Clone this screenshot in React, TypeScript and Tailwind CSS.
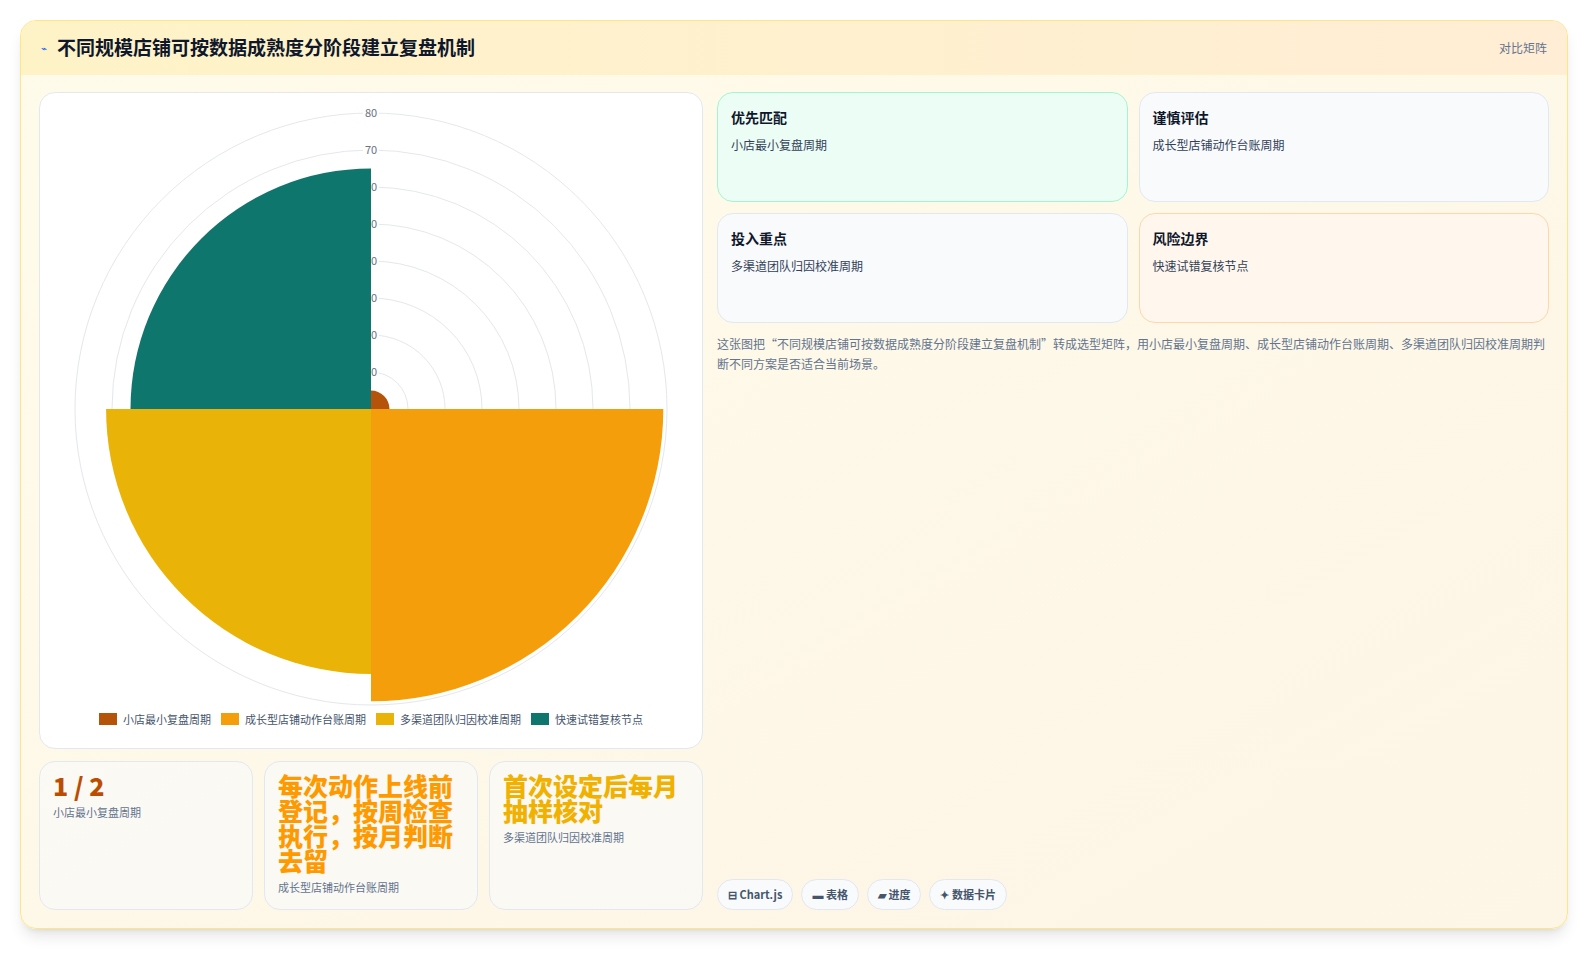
import React from "react";

const font = { fontFamily: '"Noto Sans CJK SC", "Noto Sans", sans-serif' };

const CX = 331;
const CY = 316;
const STEP = 3.7; // px per unit

function sector(r: number, a0: number, a1: number) {
  // angles in degrees, 0 = up, clockwise
  const p = (a: number) => {
    const t = ((a - 90) * Math.PI) / 180;
    return [CX + r * Math.cos(t), CY + r * Math.sin(t)];
  };
  const [x0, y0] = p(a0);
  const [x1, y1] = p(a1);
  return `M${CX},${CY} L${x0},${y0} A${r},${r} 0 0 1 ${x1},${y1} Z`;
}

const segments = [
  { v: 5, color: "#b45309", a: 0 },
  { v: 79, color: "#f59e0b", a: 90 },
  { v: 71.6, color: "#eab308", a: 180 },
  { v: 65, color: "#0f766e", a: 270 },
];

const legend = [
  { label: "小店最小复盘周期", color: "#b45309" },
  { label: "成长型店铺动作台账周期", color: "#f59e0b" },
  { label: "多渠道团队归因校准周期", color: "#eab308" },
  { label: "快速试错复核节点", color: "#0f766e" },
];

function Chart() {
  const ticks = [10, 20, 30, 40, 50, 60, 70, 80];
  return (
    <div className="rounded-2xl border border-slate-200 bg-white px-0 pt-0 pb-5 flex flex-col items-center">
      <svg width="662" height="622" className="block">
        {ticks.map((t) => (
          <circle key={t} cx={CX} cy={CY} r={t * STEP} fill="none" stroke="#e5e7eb" strokeWidth="1" />
        ))}
        {ticks.map((t) => (
          <g key={"l" + t}>
            <rect x={CX - 8} y={CY - t * STEP - 6} width="16" height="12" fill="white" />
            <text x={CX} y={CY - t * STEP + 4} textAnchor="middle" fontSize="11" fill="#6b7280" style={font}>
              {t}
            </text>
          </g>
        ))}
        {segments.map((s) => (
          <path key={s.color} d={sector(s.v * STEP, s.a, s.a + 90)} fill={s.color} />
        ))}
      </svg>
      <div className="flex items-center gap-2.5 text-[11px] text-slate-600 -mt-1" style={font}>
        {legend.map((l) => (
          <div key={l.label} className="flex items-center gap-1.5">
            <span className="inline-block w-[18px] h-[12px]" style={{ background: l.color }} />
            <span>{l.label}</span>
          </div>
        ))}
      </div>
    </div>
  );
}

function Stat({ big, color, sub }: { big: string; color: string; sub: string }) {
  return (
    <div className="flex-1 h-[149px] rounded-2xl border border-slate-200 bg-slate-50/60 px-[13px] pt-[11px]">
      <div className={`text-[25px] leading-[25px] font-black ${color}`}>{big}</div>
      <div className="mt-1.5 text-[11px] text-slate-500">{sub}</div>
    </div>
  );
}

function Card({ title, sub, cls }: { title: string; sub: string; cls: string }) {
  return (
    <div className={`h-[110px] rounded-2xl border px-[13px] pt-[14px] ${cls}`}>
      <div className="text-[14px] font-bold text-slate-900">{title}</div>
      <div className="mt-2 text-[12px] text-slate-700">{sub}</div>
    </div>
  );
}

export default function App() {
  return (
    <div className="min-h-screen bg-white p-5" style={font}>
      <div className="rounded-2xl border border-amber-200 bg-gradient-to-br from-[#fffbeb] to-[#fdf5e6] shadow-lg overflow-hidden">
        <div className="h-[54px] flex items-center justify-between px-5 bg-gradient-to-r from-[#fef3c7] to-[#ffedd5] border-b border-amber-100">
          <div className="flex items-center gap-2.5">
            <span className="text-[10px] text-blue-600">⌁</span>
            <span className="text-[19px] font-bold text-slate-900">不同规模店铺可按数据成熟度分阶段建立复盘机制</span>
          </div>
          <span className="text-[12px] text-slate-500">对比矩阵</span>
        </div>
        <div className="flex gap-[14px] px-[18px] pt-[17px] pb-[18px]">
          <div className="w-[664px] flex flex-col gap-3">
            <Chart />
            <div className="flex gap-[11px]">
              <Stat big="1 / 2" color="text-amber-700" sub="小店最小复盘周期" />
              <Stat big="每次动作上线前登记，按周检查执行，按月判断去留" color="text-amber-500" sub="成长型店铺动作台账周期" />
              <Stat big="首次设定后每月抽样核对" color="text-yellow-500" sub="多渠道团队归因校准周期" />
            </div>
          </div>
          <div className="flex-1 flex flex-col">
            <div className="grid grid-cols-2 gap-[11px]">
              <Card title="优先匹配" sub="小店最小复盘周期" cls="bg-emerald-50 border-emerald-200" />
              <Card title="谨慎评估" sub="成长型店铺动作台账周期" cls="bg-slate-50 border-slate-200" />
              <Card title="投入重点" sub="多渠道团队归因校准周期" cls="bg-slate-50 border-slate-200" />
              <Card title="风险边界" sub="快速试错复核节点" cls="bg-orange-50 border-orange-200" />
            </div>
            <p className="mt-[11px] text-[12px] leading-[20px] text-slate-500">
              这张图把“不同规模店铺可按数据成熟度分阶段建立复盘机制”转成选型矩阵，用小店最小复盘周期、成长型店铺动作台账周期、多渠道团队归因校准周期判断不同方案是否适合当前场景。
            </p>
            <div className="mt-auto flex gap-2">
              {["⊟ Chart.js", "▬ 表格", "▰ 进度", "✦ 数据卡片"].map((t) => (
                <span key={t} className="rounded-full border border-slate-200 bg-slate-50 px-2.5 py-1.5 text-[11px] font-semibold text-slate-600">
                  {t}
                </span>
              ))}
            </div>
          </div>
        </div>
      </div>
    </div>
  );
}
